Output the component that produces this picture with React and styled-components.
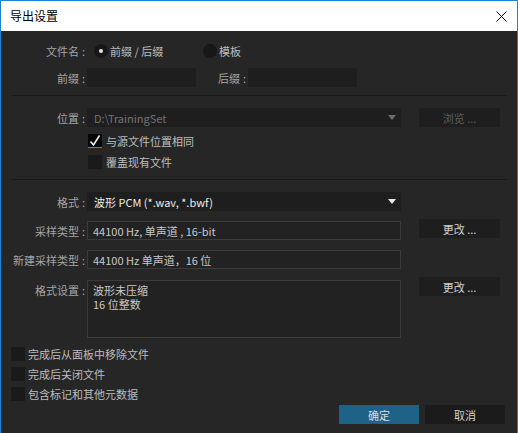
import React from "react";
import styled, { createGlobalStyle } from "styled-components";

const Global = createGlobalStyle`
  html, body { margin: 0; padding: 0; background: #262626; }
  body { font-family: "Noto Sans CJK SC", "Noto Sans", sans-serif; }
  * { box-sizing: border-box; }
`;

const Window = styled.div`
  width: 518px;
  height: 433px;
  border: 1px solid #1883d7;
  border-bottom: none;
  display: flex;
  flex-direction: column;
  background: #262626;
  overflow: hidden;
`;

const TitleBar = styled.div`
  height: 30px;
  flex: none;
  background: #ffffff;
  display: flex;
  align-items: center;
  justify-content: space-between;
  padding: 0 10px 0 9px;
`;

const Title = styled.div`
  font-size: 12px;
  color: #000;
  line-height: 16px;
`;

const Body = styled.div`
  flex: 1;
  display: flex;
  flex-direction: column;
  background: #262626;
  font-size: 11px;
`;

const Row = styled.div`
  display: grid;
  grid-template-columns: 86px 314px 18px 81px;
  align-items: start;
  margin-top: ${(p) => p.$top || 0}px;
`;

const Label = styled.div`
  height: ${(p) => p.$h || 19}px;
  margin-top: ${(p) => p.$shift || 0}px;
  display: flex;
  align-items: ${(p) => (p.$alignTop ? "flex-start" : "center")};
  padding-top: ${(p) => (p.$alignTop ? 2 : 0)}px;
  justify-content: flex-end;
  padding-right: 2px;
  color: #a4a4a4;
  white-space: nowrap;
  &::after {
    content: ":";
    margin-left: 3px;
  }
`;

const Content = styled.div`
  display: flex;
  align-items: center;
  padding-left: ${(p) => p.$pad || 0}px;
  height: 19px;
`;

const RadioOption = styled.div`
  width: ${(p) => p.$w || "auto"};
  display: flex;
  align-items: center;
  gap: 2px;
  color: #bdbdbd;
`;

const RadioCircle = styled.span`
  width: 14px;
  height: 14px;
  border-radius: 50%;
  background: #171717;
  display: flex;
  align-items: center;
  justify-content: center;
  &::after {
    content: "";
    display: ${(p) => (p.$on ? "block" : "none")};
    width: 4px;
    height: 4px;
    border-radius: 50%;
    background: #e6e6e6;
  }
`;

const PlainField = styled.div`
  width: ${(p) => p.$w || "100%"};
  height: 19px;
  background: #1e1e1e;
  display: flex;
  align-items: center;
  justify-content: space-between;
  padding: 0 5px 0 7px;
  color: ${(p) => p.$color || "#c8c8c8"};
  white-space: nowrap;
`;

const SubLabel = styled(Label)`
  margin-left: 22px;
  margin-right: 2px;
  padding-right: 0;
`;

const Triangle = styled.span`
  width: 0;
  height: 0;
  border-left: 4.5px solid transparent;
  border-right: 4.5px solid transparent;
  border-top: 5px solid ${(p) => p.$color};
`;

const BoxField = styled.div`
  height: ${(p) => p.$h || 19}px;
  margin-top: ${(p) => p.$shift || 0}px;
  border: 1px solid #3b3b3b;
  background: #222222;
  color: #c8c8c8;
  padding: ${(p) => (p.$multi ? "2px 5px" : "0 5px")};
  display: flex;
  flex-direction: column;
  justify-content: ${(p) => (p.$multi ? "flex-start" : "center")};
  line-height: 14px;
  white-space: nowrap;
`;

const Line = styled.div`
  height: 14px;
  line-height: 14px;
`;

const SideButton = styled.div`
  grid-column: 4;
  height: 19px;
  background: #1e1e1e;
  display: flex;
  align-items: center;
  justify-content: center;
  color: ${(p) => (p.$disabled ? "#5c5c5c" : "#d2d2d2")};
  white-space: nowrap;
`;

const Divider = styled.div`
  margin: ${(p) => p.$top}px 10px 0 11px;
  height: 1px;
  background: #1a1a1a;
`;

const CheckRow = styled.div`
  display: flex;
  align-items: center;
  gap: ${(p) => p.$gap || 3}px;
  height: 14px;
  margin-top: ${(p) => p.$top || 0}px;
  padding-left: ${(p) => p.$indent || 0}px;
  color: #bdbdbd;
  white-space: nowrap;
`;

const Box = styled.span`
  width: 14px;
  height: 14px;
  flex: none;
  background: ${(p) => (p.$on ? "#060606" : "#1a1a1a")};
  border-bottom: ${(p) => (p.$on ? "1px solid #2a8fdc" : "none")};
  display: flex;
  align-items: center;
  justify-content: center;
`;

const Footer = styled.div`
  display: flex;
  justify-content: flex-end;
  gap: 6px;
  padding-right: 12px;
  margin-top: 4px;
`;

const DialogButton = styled.div`
  width: 80px;
  height: 19px;
  display: flex;
  align-items: center;
  justify-content: center;
  background: ${(p) => (p.$primary ? "#1e6287" : "#1b1b1b")};
  color: ${(p) => (p.$primary ? "#dcdcdc" : "#cfcfcf")};
`;

const CloseIcon = () => (
  <svg width="11" height="11" viewBox="0 0 11 11">
    <path d="M0.5 0.5 L10.5 10.5 M10.5 0.5 L0.5 10.5" stroke="#000" strokeWidth="1" />
  </svg>
);

const CheckMark = () => (
  <svg width="14" height="14" viewBox="0 0 14 14">
    <path d="M2.5 7.5 L5.5 11 L11.5 1.5" stroke="#f2f2f2" strokeWidth="1.6" fill="none" />
  </svg>
);

export default function App() {
  return (
    <>
      <Global />
      <Window>
        <TitleBar>
          <Title>导出设置</Title>
          <CloseIcon />
        </TitleBar>
        <Body>
          <Row $top={10}>
            <Label>文件名</Label>
            <Content $pad={7}>
              <RadioOption $w="109px">
                <RadioCircle $on />
                前缀 / 后缀
              </RadioOption>
              <RadioOption>
                <RadioCircle />
                模板
              </RadioOption>
            </Content>
          </Row>
          <Row $top={8}>
            <Label>前缀</Label>
            <Content>
              <PlainField $w="109px" />
              <SubLabel>后缀</SubLabel>
              <PlainField $w="109px" />
            </Content>
          </Row>
          <Divider $top={8} />
          <Row $top={12}>
            <Label>位置</Label>
            <PlainField $color="#737373">
              D:\TrainingSet
              <Triangle $color="#6e6e6e" />
            </PlainField>
            <SideButton $disabled>浏览 ...</SideButton>
          </Row>
          <CheckRow $top={7} $indent={87} $gap={4}>
            <Box $on>
              <CheckMark />
            </Box>
            与源文件位置相同
          </CheckRow>
          <CheckRow $top={7} $indent={87} $gap={4}>
            <Box />
            覆盖现有文件
          </CheckRow>
          <Divider $top={10} />
          <Row $top={12}>
            <Label>格式</Label>
            <PlainField $color="#ececec">
              波形 PCM (*.wav, *.bwf)
              <Triangle $color="#e8e8e8" />
            </PlainField>
          </Row>
          <Row $top={8}>
            <Label $shift={2}>采样类型</Label>
            <BoxField $shift={2}>44100 Hz, 单声道 , 16-bit</BoxField>
            <SideButton>更改 ...</SideButton>
          </Row>
          <Row $top={10}>
            <Label>新建采样类型</Label>
            <BoxField>44100 Hz 单声道，16 位</BoxField>
          </Row>
          <Row $top={8}>
            <Label $shift={3} $alignTop>格式设置</Label>
            <BoxField $shift={3} $h={58} $multi>
              <Line>波形未压缩</Line>
              <Line>16 位整数</Line>
            </BoxField>
            <SideButton>更改 ...</SideButton>
          </Row>
          <CheckRow $top={9} $indent={10}>
            <Box />
            完成后从面板中移除文件
          </CheckRow>
          <CheckRow $top={6} $indent={10}>
            <Box />
            完成后关闭文件
          </CheckRow>
          <CheckRow $top={6} $indent={10}>
            <Box />
            包含标记和其他元数据
          </CheckRow>
          <Footer>
            <DialogButton $primary>确定</DialogButton>
            <DialogButton>取消</DialogButton>
          </Footer>
        </Body>
      </Window>
    </>
  );
}
